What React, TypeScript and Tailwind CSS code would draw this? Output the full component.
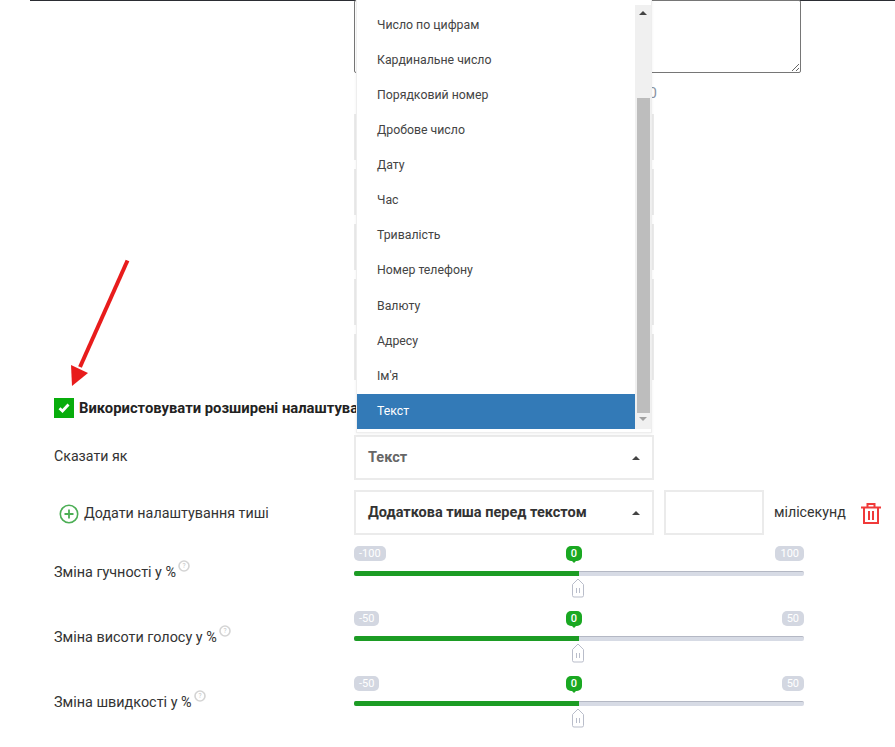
const items = ['Число по цифрам','Кардинальне число','Порядковий номер','Дробове число','Дату','Час','Тривалість','Номер телефону','Валюту','Адресу',"Ім'я",'Текст'];

function Caret() {
  return <span className="w-0 h-0 border-x-[4px] border-x-transparent border-b-[4px] border-b-[#444]" />;
}

function Help() {
  return (
    <svg width="12" height="12" viewBox="0 0 12 12" className="ml-[2px] -mt-[3px] shrink-0">
      <circle cx="6" cy="6" r="5" fill="none" stroke="#d4d4d4" strokeWidth="1.6" />
      <text x="6" y="8.2" textAnchor="middle" fontSize="6.5" fill="#c4c4c4" fontFamily="Roboto">?</text>
    </svg>
  );
}

function SliderRow({ label, min, max }: { label: string; min: string; max: string }) {
  return (
    <div className="flex h-[65px]">
      <div className="w-[324px] flex items-start pl-[24px] pt-[17px] text-[14.4px] leading-[20px] text-[#333]">
        {label}
        <Help />
      </div>
      <div className="relative w-[450px]">
        <div className="flex justify-between text-[11px] leading-[15px] text-white">
          <span className="h-[15px] px-[5px] rounded-[5px] bg-[#d3d7e1]">{min}</span>
          <span className="h-[15px] px-[5px] rounded-[5px] bg-[#d3d7e1]">{max}</span>
        </div>
        <div className="relative mt-[10px] h-[5px] rounded-[2px] bg-[#d7dbe5] border-t border-[#b4b8c4]">
          <div className="absolute left-0 -top-[1px] h-[5px] w-[225px] rounded-l-[2px] bg-[#1c9c24]" />
        </div>
        <div className="absolute left-[212px] top-0 w-[16px] h-[15px] rounded-[5px] bg-[#1aa822] text-white text-[11px] leading-[15px] text-center font-medium">
          0
          <span className="absolute left-[5px] top-[14px] w-0 h-0 border-x-[3px] border-x-transparent border-t-[3px] border-t-[#1aa822]" />
        </div>
        <svg width="14" height="20" viewBox="0 0 14 20" className="absolute left-[217px] top-[32px]">
          <path d="M1.5 6.5 7 1l5.5 5.5v11a1.5 1.5 0 0 1-1.5 1.5H3a1.5 1.5 0 0 1-1.5-1.5z" fill="#fff" stroke="#b9bdca" />
          <path d="M5.5 10v5M8.5 10v5" stroke="#b9bdca" />
        </svg>
      </div>
    </div>
  );
}

function Select({ text, dark }: { text: string; dark?: boolean }) {
  return (
    <div className={`w-[300px] h-[45px] border-2 border-[#ebebeb] flex items-center justify-between pl-[12px] pr-[12px] text-[14.5px] font-bold ${dark ? 'text-[#333]' : 'text-[#666]'}`}>
      {text}
      <Caret />
    </div>
  );
}

export default function App() {
  return (
    <div className="relative w-[895px] h-[747px] overflow-hidden bg-white font-['Roboto',sans-serif]">
      <div className="ml-[30px] border-t border-[#2b2d33] h-[747px]">
        <div className="pl-[324px]">
          <textarea className="block w-[447px] h-[73px] -mt-[1px] border border-[#767676] rounded-[2px] bg-white" />
          <div className="w-[303px] h-[41px] pt-[10px] text-right text-[15px] leading-[20px] text-[#8a94a3]">0</div>
          <div className="flex flex-col gap-[9px]">
            {[0, 1, 2, 3, 4].map((i) => (
              <div key={i} className="w-[300px] h-[46px] border-2 border-[#ebebeb]" />
            ))}
          </div>
        </div>

        <div className="flex items-center pl-[24px] mt-[18px] h-[20px]">
          <span className="w-[20px] h-[20px] bg-[#08ad0c] flex items-center justify-center">
            <svg width="12" height="10" viewBox="0 0 12 10">
              <path d="M1.5 5.2 4.5 8l6-6.5" fill="none" stroke="#fff" strokeWidth="2.8" />
            </svg>
          </span>
          <span className="ml-[5px] w-[277px] overflow-hidden text-[14.8px] font-bold text-[#222] whitespace-nowrap">Використовувати розширені налаштування</span>
        </div>

        <div className="flex items-center mt-[17px]">
          <div className="w-[324px] pl-[24px] text-[14.2px] text-[#333] -mt-[2px]">Сказати як</div>
          <Select text="Текст" />
        </div>

        <div className="flex items-center mt-[10px]">
          <div className="w-[324px] pl-[29px] pt-[2px] flex items-center text-[14.3px] text-[#333] gap-[5px]">
            <svg width="20" height="20" viewBox="0 0 20 20">
              <circle cx="10" cy="10" r="8.7" fill="none" stroke="#4cae55" strokeWidth="1.6" />
              <path d="M10 5.5v9M5.5 10h9" stroke="#4cae55" strokeWidth="1.8" />
            </svg>
            Додати налаштування тиші
          </div>
          <Select text="Додаткова тиша перед текстом" dark />
          <div className="ml-[10px] w-[100px] h-[45px] border-2 border-[#ebebeb]" />
          <span className="ml-[10px] text-[14.2px] text-[#333]">мілісекунд</span>
          <svg width="20" height="21" viewBox="0 0 20 21" className="ml-[15px] mt-[1px]" fill="none" stroke="#f03a3a" strokeWidth="2">
            <path d="M0 4.5h20M6.5 4V1h7v3M3 5v15h14V5M8 8v9M12 8v9" />
          </svg>
        </div>

        <div className="mt-[11px]">
          <SliderRow label="Зміна гучності у %" min="-100" max="100" />
          <SliderRow label="Зміна висоти голосу у %" min="-50" max="50" />
          <SliderRow label="Зміна швидкості у %" min="-50" max="50" />
        </div>
      </div>

      <svg width="80" height="135" viewBox="0 0 80 135" className="absolute left-[60px] top-[255px]">
        <path d="M67.5 5.5 20 112" stroke="#e81c1c" strokeWidth="4" fill="none" />
        <path d="M12 131 11 110 28 118z" fill="#e81c1c" />
      </svg>

      <div className="absolute left-[356px] -top-[2px] w-[296px] h-[435px] bg-white border border-[#eeeeee] border-t-[#dddddd] flex shadow-[0_1px_3px_rgba(0,0,0,0.06)]">
        <ul className="w-[278px] pt-[8.8px] text-[12.3px] text-[#444]">
          {items.map((t, i) => (
            <li key={t} className={`h-[35.1px] leading-[35px] pl-[20px] ${i === 11 ? 'bg-[#337ab7] text-white' : ''}`}>{t}</li>
          ))}
        </ul>
        <div className="relative flex-1 mt-[6px] mb-[3px] bg-[#f0f0f0] flex flex-col items-center">
          <span className="mt-[6px] w-0 h-0 border-x-[4px] border-x-transparent border-b-[4px] border-b-[#444]" />
          <div className="mt-[83px] w-[13px] h-[315px] bg-[#bdbdbd]" />
          <span className="mt-[4px] w-0 h-0 border-x-[4px] border-x-transparent border-t-[4px] border-t-[#a0a0a0]" />
        </div>
      </div>
    </div>
  );
}
